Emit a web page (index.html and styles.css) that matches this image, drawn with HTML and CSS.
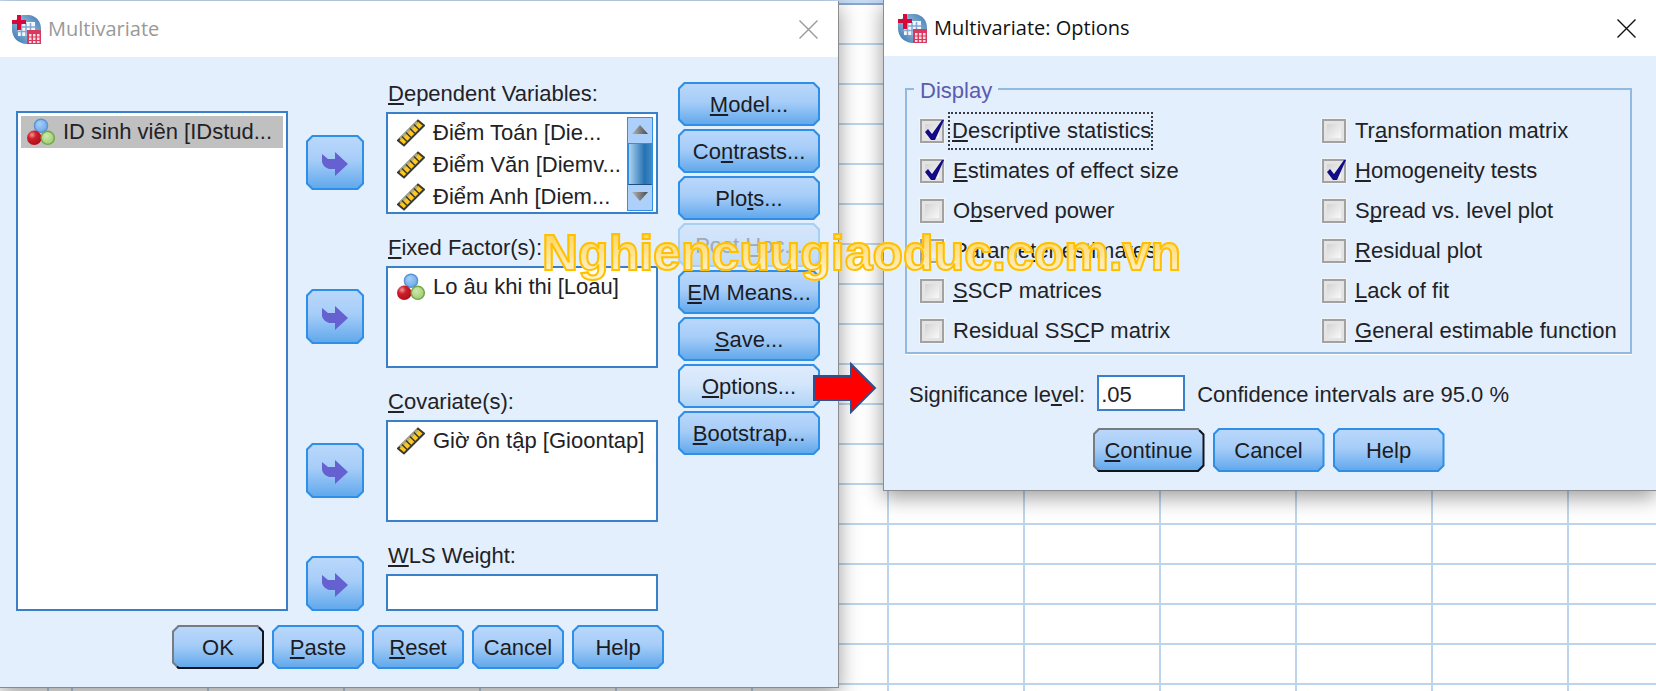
FILE: index.html
```html
<!DOCTYPE html>
<html lang="en">
<head>
    <meta charset="UTF-8">
    <meta name="viewport" content="width=device-width, initial-scale=1.0">
    <title>Multivariate</title>

    <link rel="stylesheet" href="styles.css">
</head>
<body>
    <!-- shared icons -->
    <svg class="sprite" aria-hidden="true">
        <defs>
            <linearGradient id="globe" x1="1" y1="0" x2="0" y2="1">
                <stop offset="0" stop-color="#3f78ae"/>
                <stop offset="0.5" stop-color="#8fb9dc"/>
                <stop offset="1" stop-color="#2d6ca8"/>
            </linearGradient>
            <radialGradient id="ballBlue" cx="0.4" cy="0.35" r="0.7">
                <stop offset="0" stop-color="#a5cff8"/>
                <stop offset="1" stop-color="#6ba6e8"/>
            </radialGradient>
            <radialGradient id="ballRed" cx="0.35" cy="0.3" r="0.7">
                <stop offset="0" stop-color="#f29a9a"/>
                <stop offset="0.4" stop-color="#cf1f2b"/>
                <stop offset="1" stop-color="#b00f1c"/>
            </radialGradient>
            <radialGradient id="ballGreen" cx="0.4" cy="0.35" r="0.7">
                <stop offset="0" stop-color="#cfe8ac"/>
                <stop offset="1" stop-color="#9ccc70"/>
            </radialGradient>
        </defs>
        <symbol id="app" viewBox="0 0 29 29">
            <path d="M10 0H17C25 1 29 7 29 14V29H14C5 28 0 22 0 14V8Z" fill="url(#globe)"/>
            <path d="M9 7H23V21H6V12H9Z" fill="#f4f8fc"/>
            <path d="M5 12H23M5 16.500H23M9.500 8V21M14 8V21M18.500 8V21" stroke="#7fa9d2" stroke-width="1.500"/>
            <path d="M5 0H9V5H14V9H9V15H5V9H0V5H5Z" fill="#d5093c"/>
            <path d="M15 15H29V29H15Z" fill="#d63a5c"/>
            <path d="M17 19h2.500v2.500h-2.500zM21 19h2.500v2.500h-2.500zM25 19h2.500v2.500h-2.500zM17 22.500h2.500v2.500h-2.500zM21 22.500h2.500v2.500h-2.500zM25 22.500h2.500v2.500h-2.500zM17 26h2.500v2h-2.500zM21 26h2.500v2h-2.500zM25 26h2.500v2h-2.500z" fill="#f9dfe5"/>
        </symbol>
        <symbol id="nominal" viewBox="0 0 29 28">
            <circle cx="14.500" cy="7.500" r="6.800" fill="url(#ballBlue)" stroke="#5b93d4" stroke-width="1.500"/>
            <circle cx="7.500" cy="20" r="7.500" fill="url(#ballRed)"/>
            <circle cx="21.500" cy="20" r="6.800" fill="url(#ballGreen)" stroke="#72a84a" stroke-width="1.500"/>
        </symbol>
        <symbol id="scale" viewBox="0 0 28 28">
            <path d="M1 21.500L21 1.500L27 6.500L7 26.500Z" fill="#ffc81e" stroke="#3a3a30" stroke-width="2"/>
            <path d="M3 20L20.500 3" stroke="#b3ab7c" stroke-width="2.500"/>
            <path d="M5 17.500l5 5M9 13.500l5 5M13 9.500l5 5M17 5.500l5 5" stroke="#3a3a30" stroke-width="1.500"/>
        </symbol>
        <symbol id="move" viewBox="0 0 26 24">
            <path d="M0 2L6 7H13V0L26 12L13 24V17H7Q1 15 0 10Z" fill="#6661d0"/>
        </symbol>
        <symbol id="close" viewBox="0 0 19 19">
            <path d="M0.500 0.500L18.500 18.500M18.500 0.500L0.500 18.500" stroke="currentColor" stroke-width="1.400" fill="none"/>
        </symbol>
    </svg>

    <main class="desktop">
        <section class="dialog dialog-main" aria-label="Multivariate">
            <header class="titlebar inactive">
                <svg class="app-icon"><use href="#app"/></svg>
                <h1>Multivariate</h1>
                <button class="close" type="button" aria-label="Close"><svg><use href="#close"/></svg></button>
            </header>
            <form class="main-body">
                <div class="panes">
                    <ul class="box source" role="listbox" aria-label="Variables">
                        <li class="selected" role="option" aria-selected="true"><svg><use href="#nominal"/></svg>ID sinh viên [IDstud...</li>
                    </ul>

                    <div class="targets">
                        <div class="target">
                            <button class="btn move" type="button" aria-label="Move to dependent variables"><svg><use href="#move"/></svg></button>
                            <div class="field">
                                <span class="label" id="lblDependent"><u>D</u>ependent Variables:</span>
                                <div class="box scrollable">
                                    <ul role="listbox" aria-labelledby="lblDependent">
                                        <li role="option"><svg><use href="#scale"/></svg>Điểm Toán [Die...</li>
                                        <li role="option"><svg><use href="#scale"/></svg>Điểm Văn [Diemv...</li>
                                        <li role="option"><svg><use href="#scale"/></svg>Điểm Anh [Diem...</li>
                                    </ul>
                                    <div class="scrollbar">
                                        <span class="up"></span>
                                        <span class="thumb"></span>
                                        <span class="down"></span>
                                    </div>
                                </div>
                            </div>
                        </div>
                        <div class="target">
                            <button class="btn move" type="button" aria-label="Move to fixed factors"><svg><use href="#move"/></svg></button>
                            <div class="field">
                                <span class="label" id="lblFixed"><u>F</u>ixed Factor(s):</span>
                                <ul class="box" role="listbox" aria-labelledby="lblFixed">
                                    <li role="option"><svg><use href="#nominal"/></svg>Lo âu khi thi [Loau]</li>
                                </ul>
                            </div>
                        </div>
                        <div class="target">
                            <button class="btn move" type="button" aria-label="Move to covariates"><svg><use href="#move"/></svg></button>
                            <div class="field">
                                <span class="label" id="lblCovariate"><u>C</u>ovariate(s):</span>
                                <ul class="box" role="listbox" aria-labelledby="lblCovariate">
                                    <li role="option"><svg><use href="#scale"/></svg>Giờ ôn tập [Gioontap]</li>
                                </ul>
                            </div>
                        </div>
                        <div class="target single">
                            <button class="btn move" type="button" aria-label="Move to WLS weight"><svg><use href="#move"/></svg></button>
                            <div class="field">
                                <label class="label" for="wls"><u>W</u>LS Weight:</label>
                                <input type="text" id="wls">
                            </div>
                        </div>
                    </div>

                    <div class="side-buttons">
                        <button class="btn" type="button"><span><u>M</u>odel...</span></button>
                        <button class="btn" type="button"><span>Co<u>n</u>trasts...</span></button>
                        <button class="btn" type="button"><span>Plo<u>t</u>s...</span></button>
                        <button class="btn" type="button" disabled><span>Post <u>H</u>oc...</span></button>
                        <button class="btn" type="button"><span><u>E</u>M Means...</span></button>
                        <button class="btn" type="button"><span><u>S</u>ave...</span></button>
                        <button class="btn hot" type="button"><span><u>O</u>ptions...</span></button>
                        <button class="btn" type="button"><span><u>B</u>ootstrap...</span></button>
                    </div>
                </div>

                <div class="actions">
                    <button class="btn default" type="button">OK</button>
                    <button class="btn" type="button"><span><u>P</u>aste</span></button>
                    <button class="btn" type="button"><span><u>R</u>eset</span></button>
                    <button class="btn" type="button">Cancel</button>
                    <button class="btn" type="button">Help</button>
                </div>
            </form>
        </section>

        <section class="dialog dialog-options" aria-label="Multivariate: Options">
            <header class="titlebar">
                <svg class="app-icon"><use href="#app"/></svg>
                <h1>Multivariate: Options</h1>
                <button class="close" type="button" aria-label="Close"><svg><use href="#close"/></svg></button>
            </header>
            <form class="options-body">
                <fieldset>
                    <legend>Display</legend>
                    <div class="checks">
                        <label><input type="checkbox" checked><span class="focused"><u>D</u>escriptive statistics</span></label>
                        <label><input type="checkbox"><span>Tr<u>a</u>nsformation matrix</span></label>
                        <label><input type="checkbox" checked><span><u>E</u>stimates of effect size</span></label>
                        <label><input type="checkbox" checked><span><u>H</u>omogeneity tests</span></label>
                        <label><input type="checkbox"><span>O<u>b</u>served power</span></label>
                        <label><input type="checkbox"><span>S<u>p</u>read vs. level plot</span></label>
                        <label><input type="checkbox"><span>Parame<u>t</u>er estimates</span></label>
                        <label><input type="checkbox"><span><u>R</u>esidual plot</span></label>
                        <label><input type="checkbox"><span><u>S</u>SCP matrices</span></label>
                        <label><input type="checkbox"><span><u>L</u>ack of fit</span></label>
                        <label><input type="checkbox"><span>Residual SS<u>C</u>P matrix</span></label>
                        <label><input type="checkbox"><span><u>G</u>eneral estimable function</span></label>
                    </div>
                </fieldset>

                <div class="significance">
                    <label for="sig">Significance le<u>v</u>el:</label>
                    <input type="text" id="sig" value=".05">
                    <span>Confidence intervals are 95.0 %</span>
                </div>

                <div class="actions">
                    <button class="btn default" type="button"><span><u>C</u>ontinue</span></button>
                    <button class="btn" type="button">Cancel</button>
                    <button class="btn" type="button">Help</button>
                </div>
            </form>
        </section>

        <svg class="pointer" viewBox="0 0 64 52" aria-hidden="true">
            <path d="M1 14H38V2L62 26L38 50V38H1Z" fill="#ff0000" stroke="#2f528f" stroke-width="2"/>
        </svg>
        <div class="watermark">Nghiencuugiaoduc.com.vn</div>
    </main>
</body>
</html>
```
FILE: styles.css
```css
* {
    box-sizing: border-box;
}

body {
    margin: 0;
    font-family: "Liberation Sans", Arial, sans-serif;
    font-size: 22px;
    line-height: 26px;
    color: #222226;
}

u {
    text-decoration-thickness: 2px;
    text-underline-offset: 2px;
    text-decoration-skip-ink: none;
}

ul {
    list-style: none;
    margin: 0;
    padding: 0;
}

.sprite {
    position: absolute;
    width: 0;
    height: 0;
}

/* empty data sheet behind the dialogs */
.desktop {
    position: relative;
    min-height: 100vh;
    overflow: hidden;
    background-color: #ffffff;
    background-image:
        linear-gradient(#c5daf5 3px, #8ba6c8 3px, #8ba6c8 5px, transparent 5px),
        repeating-linear-gradient(to right, #bdd5ec 0, #bdd5ec 2px, transparent 2px, transparent 136px),
        repeating-linear-gradient(#bdd5ec 0, #bdd5ec 2px, transparent 2px, transparent 40px);
    background-position: 0 0, 71px 0, 0 3px;
}

/* windows */
.dialog {
    position: absolute;
    background-color: #e3effc;
    border: 1px solid #8a8c90;
    box-shadow: 0 6px 20px rgba(0, 0, 0, 0.4);
}

.dialog-main {
    top: 1px;
    left: 0;
    width: 839px;
    border-width: 0 1px 1px 0;
}

.dialog-options {
    top: 0;
    left: 883px;
    right: 0;
    border-width: 0 0 1px 1px;
}

.titlebar {
    display: flex;
    align-items: center;
    gap: 7px;
    height: 56px;
    padding: 0 20px 0 12px;
    background-color: #ffffff;
    color: #111111;
}

.dialog-options .titlebar {
    padding-left: 14px;
}

.titlebar.inactive {
    color: #999999;
}

.app-icon {
    width: 29px;
    height: 29px;
}

h1 {
    flex: 1;
    margin: 0;
    font-family: "Open Sans", "Noto Sans", sans-serif;
    font-size: 20px;
    font-weight: 400;
}

.close {
    padding: 0;
    border: 0;
    background: none;
    color: inherit;
}

.close svg {
    display: block;
    width: 19px;
    height: 19px;
}

/* buttons with cut corners: the fill sits 2px inside the border colour */
.btn {
    position: relative;
    isolation: isolate;
    height: 44px;
    padding: 2px 0 0;
    border: 0;
    background: #2f8fe6;
    clip-path: polygon(6px 0, calc(100% - 6px) 0, 100% 6px, 100% calc(100% - 6px), calc(100% - 6px) 100%, 6px 100%, 0 calc(100% - 6px), 0 6px);
    font: inherit;
    color: #1c1c24;
}

.btn::before {
    content: "";
    position: absolute;
    z-index: -1;
    inset: 2px;
    background: linear-gradient(#bad7fb, #a6cdf8 45%, #62a9ec);
    clip-path: polygon(5px 0, calc(100% - 5px) 0, 100% 5px, 100% calc(100% - 5px), calc(100% - 5px) 100%, 5px 100%, 0 calc(100% - 5px), 0 5px);
}

.btn.hot::before {
    background: linear-gradient(#deebfc, #d3e6fb 45%, #b1d4f5);
}

.btn.default {
    background: linear-gradient(to bottom right, #777b82 50%, #11151c 50%);
}

.btn:disabled {
    background: #a6cff5;
    color: #a3a9b4;
}

.btn:disabled::before {
    background: linear-gradient(#d6e6fb, #c0dbf7);
}

.move {
    flex: none;
    width: 58px;
    height: 55px;
}

.move svg {
    display: block;
    width: 26px;
    height: 24px;
    margin: 0 auto;
}

.actions {
    display: flex;
    justify-content: center;
    gap: 8px;
}

/* main dialog */
.main-body {
    padding: 24px 18px 18px 16px;
}

.panes {
    display: grid;
    grid-template-columns: 272px 1fr 142px;
    margin-bottom: 14px;
}

.box,
input[type="text"] {
    border: 2px solid #3a80c8;
    background-color: #ffffff;
}

.box {
    padding: 3px 3px 3px 9px;
}

.box li {
    display: flex;
    align-items: center;
    gap: 8px;
    height: 32px;
    white-space: nowrap;
}

.box li svg {
    flex: none;
    width: 28px;
    height: 28px;
}

.box.source {
    margin-top: 30px;
    padding: 3px;
}

.box .selected {
    padding-left: 6px;
    background-color: #c0c0c0;
}

.targets {
    display: flex;
    flex-direction: column;
    gap: 21px;
    padding: 0 20px 0 18px;
}

.target {
    display: flex;
    align-items: flex-end;
    gap: 22px;
}

.target .move {
    margin-bottom: 24px;
}

.target.single .move {
    margin-bottom: 0;
}

.field {
    flex: 1;
}

.label {
    display: block;
    margin-bottom: 5px;
    padding-left: 2px;
}

.field .box {
    height: 102px;
}

.field input {
    display: block;
    width: 100%;
    height: 37px;
}

.scrollable {
    display: flex;
    justify-content: space-between;
    overflow: hidden;
}

.scrollable ul {
    width: 0;
}

.scrollbar {
    display: flex;
    flex-direction: column;
    width: 26px;
    height: 94px;
    border: 1px solid #2f8fe6;
    background-color: #acd0fa;
}

.scrollbar span {
    flex: 1;
}

.scrollbar .thumb {
    flex: none;
    height: 42px;
    border: 1px solid #2f8fe6;
    border-bottom-color: #1c4f80;
    background: linear-gradient(to right, #acd3f0, #2672b2 70%, #3c86c4);
}

.scrollbar .up::before,
.scrollbar .down::before {
    content: "";
    display: block;
    width: 16px;
    height: 9px;
    margin: 7px auto;
    background: linear-gradient(to right, #b5b5b5, #4a4a4a);
    clip-path: polygon(50% 0, 100% 100%, 0 100%);
}

.scrollbar .down::before {
    clip-path: polygon(0 0, 100% 0, 50% 100%);
}

.side-buttons {
    display: flex;
    flex-direction: column;
    gap: 3px;
    padding-top: 1px;
}

.dialog-main .actions .btn {
    width: 92px;
}

/* options dialog */
.options-body {
    padding: 18px 24px 18px 21px;
}

fieldset {
    margin: 0 0 21px;
    padding: 7px 0 1px 13px;
    border: 2px solid #92b9e0;
    box-shadow: 0 1px 0 #ffffff;
}

legend {
    margin-left: -6px;
    padding: 4px 6px 0;
    color: #5b5bb0;
}

.checks {
    display: grid;
    grid-template-columns: 402px 1fr;
    grid-auto-rows: 40px;
    white-space: nowrap;
}

.checks label {
    display: flex;
    align-items: center;
    gap: 5px;
}

.checks span {
    padding: 4px 0 4px 3px;
    border: 1px solid transparent;
}

.checks .focused {
    border: 2px dotted #3a3a40;
    margin: 0 -1px;
    padding-left: 2px;
}

.checks input {
    appearance: none;
    position: relative;
    width: 24px;
    height: 24px;
    margin: 0;
    border: 2px solid #a2a2a2;
    background: linear-gradient(135deg, #cccccc, #f6f6f6 80%);
    box-shadow: inset 0 0 0 3px #e4e4e4, 0 0 0 1px #f2f5f8;
}

.checks input:checked::before {
    content: "";
    position: absolute;
    inset: -2px;
    background-color: #130a86;
    clip-path: polygon(5px 13px, 8px 10px, 12px 15px, 22px 1px, 24px 1px, 15px 21px, 11px 21px);
}

.significance {
    display: flex;
    align-items: center;
    gap: 12px;
    margin-bottom: 17px;
    padding-left: 4px;
    white-space: nowrap;
}

.significance label,
.significance span {
    padding-top: 4px;
}

.significance input {
    width: 88px;
    height: 36px;
    padding: 3px 2px 0;
    font: inherit;
    color: inherit;
}

.dialog-options .actions .btn {
    width: 112px;
}

/* annotations on top of both windows */
.pointer {
    position: absolute;
    top: 362px;
    left: 813px;
    width: 64px;
    height: 52px;
}

.watermark {
    position: absolute;
    top: 223px;
    left: 542px;
    font-size: 50px;
    line-height: 60px;
    font-weight: bold;
    color: transparent;
    background: linear-gradient(#ffd45c 15%, #fff2cc 85%);
    background-clip: text;
    -webkit-background-clip: text;
    -webkit-text-stroke: 2px #ffc000;
}
```
